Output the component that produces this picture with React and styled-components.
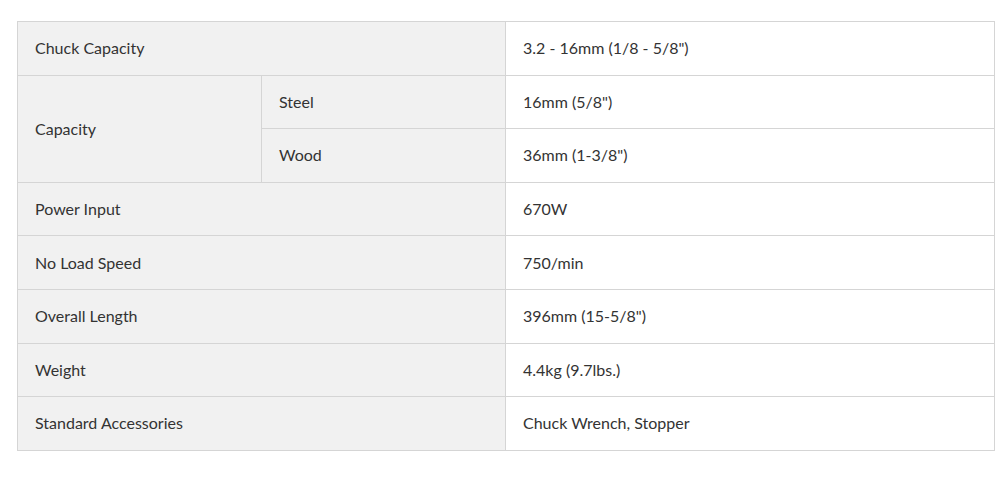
import React from "react";
import styled, { createGlobalStyle } from "styled-components";

const GlobalStyle = createGlobalStyle`
  body {
    margin: 0;
    background: #fff;
    font-family: Lato, "Liberation Sans", sans-serif;
  }
`;

const specs = [
  { label: "Chuck Capacity", value: '3.2 - 16mm (1/8 - 5/8")' },
  {
    label: "Capacity",
    subs: [
      { label: "Steel", value: '16mm (5/8")' },
      { label: "Wood", value: '36mm (1-3/8")' },
    ],
  },
  { label: "Power Input", value: "670W" },
  { label: "No Load Speed", value: "750/min" },
  { label: "Overall Length", value: '396mm (15-5/8")' },
  { label: "Weight", value: "4.4kg (9.7lbs.)" },
  { label: "Standard Accessories", value: "Chuck Wrench, Stopper" },
];

const SpecSheet = () => {
  return (
    <Wrap>
      <GlobalStyle />
      <SpecTable>
        <colgroup>
          <col style={{ width: 244 }} />
          <col style={{ width: 244 }} />
          <col />
        </colgroup>
        <tbody>
          {specs.map((row) =>
            row.subs ? (
              row.subs.map((sub, i) => (
                <tr key={row.label + sub.label}>
                  {i === 0 && (
                    <Cell $head rowSpan={row.subs.length}>
                      {row.label}
                    </Cell>
                  )}
                  <Cell $head>{sub.label}</Cell>
                  <Cell>{sub.value}</Cell>
                </tr>
              ))
            ) : (
              <tr key={row.label}>
                <Cell $head colSpan={2}>
                  {row.label}
                </Cell>
                <Cell>{row.value}</Cell>
              </tr>
            )
          )}
        </tbody>
      </SpecTable>
    </Wrap>
  );
};

const Wrap = styled.div`
  padding: 21px 10px 0 17px;
`;

const SpecTable = styled.table`
  width: 978px;
  border-collapse: collapse;
  table-layout: fixed;
  border: 1px solid #d5d5d5;
`;

const Cell = styled.td`
  height: 53.6px;
  box-sizing: border-box;
  padding: 0 17px;
  border: 1px solid #d5d5d5;
  background: ${(p) => (p.$head ? "#f1f1f1" : "#ffffff")};
  color: #333;
  font-size: 16px;
  line-height: 20px;
  vertical-align: middle;
`;

export default SpecSheet;
